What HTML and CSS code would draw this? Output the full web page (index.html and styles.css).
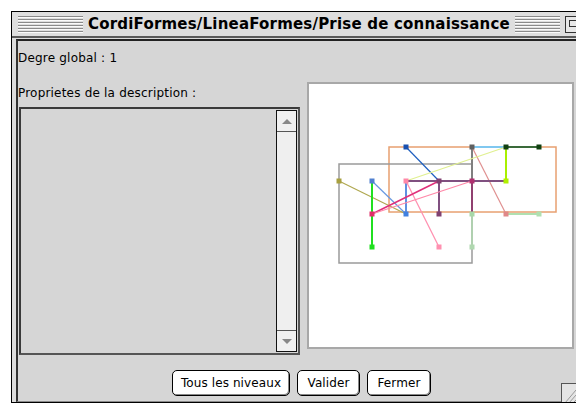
FILE: index.html
```html
<!DOCTYPE html>
<html lang="fr">
<head>
    <meta charset="UTF-8">
    <title>CordiFormes/LineaFormes/Prise de connaissance</title>
<link rel="stylesheet" href="styles.css">
</head>
<body>
    <div class="window">
        <div class="titlebar">
            <span class="stripes stripes-left"></span>
            <h1 class="title">CordiFormes/LineaFormes/Prise de connaissance</h1>
            <span class="stripes stripes-right"></span>
            <span class="zoom-box"><span></span></span>
        </div>
        <div class="frame">
            <div class="content">
                <div class="degre">Degre global : 1</div>
                <div class="panes">
                    <div class="left-pane">
                        <div class="label">Proprietes de la description :</div>
                        <div class="list">
                            <div class="list-items"></div>
                            <div class="scrollbar">
                                <div class="arrow arrow-up"><span></span></div>
                                <div class="track"></div>
                                <div class="arrow arrow-down"><span></span></div>
                            </div>
                        </div>
                    </div>
                    <div class="canvas">
                        <svg viewBox="309 84 263 263" width="263" height="263">
                            <!-- rectangles -->
                            <rect x="389" y="147" width="167" height="65" fill="none" stroke="#e8a070" stroke-width="1.5"/>
                            <rect x="339" y="164" width="133" height="99" fill="none" stroke="#9a9a9a" stroke-width="1.5"/>

                            <!-- segments -->
                            <line x1="406" y1="147" x2="439" y2="181" stroke="#2060c0" stroke-width="1.2"/>
                            <line x1="472" y1="147" x2="506" y2="147" stroke="#80c8f0" stroke-width="2"/>
                            <line x1="506" y1="147" x2="539" y2="147" stroke="#3a6a3a" stroke-width="2"/>
                            <line x1="472" y1="147" x2="472" y2="181" stroke="#808080" stroke-width="2"/>
                            <line x1="472" y1="181" x2="472" y2="214" stroke="#904070" stroke-width="2"/>
                            <line x1="472" y1="214" x2="472" y2="247" stroke="#b0d0b0" stroke-width="2"/>
                            <line x1="472" y1="147" x2="506" y2="214" stroke="#e09090" stroke-width="1.2"/>
                            <line x1="506" y1="147" x2="406" y2="181" stroke="#e0f090" stroke-width="1.2"/>
                            <line x1="506" y1="147" x2="506" y2="181" stroke="#a8f000" stroke-width="2"/>
                            <line x1="339" y1="181" x2="406" y2="214" stroke="#b0a850" stroke-width="1.2"/>
                            <line x1="372" y1="181" x2="406" y2="214" stroke="#6898e0" stroke-width="1.2"/>
                            <line x1="372" y1="181" x2="372" y2="247" stroke="#20e020" stroke-width="2"/>
                            <line x1="406" y1="181" x2="406" y2="214" stroke="#6090e0" stroke-width="2"/>
                            <line x1="406" y1="181" x2="439" y2="247" stroke="#ff90b0" stroke-width="1.2"/>
                            <line x1="406" y1="181" x2="506" y2="181" stroke="#805080" stroke-width="2"/>
                            <line x1="439" y1="181" x2="439" y2="214" stroke="#805080" stroke-width="2"/>
                            <line x1="372" y1="214" x2="439" y2="181" stroke="#e0307a" stroke-width="1.5"/>
                            <line x1="372" y1="214" x2="472" y2="181" stroke="#ff88a8" stroke-width="1.2"/>
                            <line x1="506" y1="214" x2="539" y2="214" stroke="#b0e0b0" stroke-width="2"/>

                            <!-- points -->
                            <rect x="403.5" y="144.5" width="5" height="5" fill="#1850b0"/>
                            <rect x="469.5" y="144.5" width="5" height="5" fill="#606060"/>
                            <rect x="503.5" y="144.5" width="5" height="5" fill="#104010"/>
                            <rect x="536.5" y="144.5" width="5" height="5" fill="#104010"/>
                            <rect x="336.5" y="178.5" width="5" height="5" fill="#a8a040"/>
                            <rect x="369.5" y="178.5" width="5" height="5" fill="#5080d0"/>
                            <rect x="403.5" y="178.5" width="5" height="5" fill="#ff88a8"/>
                            <rect x="436.5" y="178.5" width="5" height="5" fill="#804070"/>
                            <rect x="469.5" y="178.5" width="5" height="5" fill="#b03070"/>
                            <rect x="503.5" y="178.5" width="5" height="5" fill="#b0f000"/>
                            <rect x="369.5" y="211.5" width="5" height="5" fill="#e0306a"/>
                            <rect x="403.5" y="211.5" width="5" height="5" fill="#4080e0"/>
                            <rect x="436.5" y="211.5" width="5" height="5" fill="#804070"/>
                            <rect x="469.5" y="211.5" width="5" height="5" fill="#a8d8a8"/>
                            <rect x="503.5" y="211.5" width="5" height="5" fill="#e08888"/>
                            <rect x="536.5" y="211.5" width="5" height="5" fill="#b0e0b0"/>
                            <rect x="369.5" y="244.5" width="5" height="5" fill="#20e020"/>
                            <rect x="436.5" y="244.5" width="5" height="5" fill="#ff90b0"/>
                            <rect x="469.5" y="244.5" width="5" height="5" fill="#b0d8b0"/>
                        </svg>
                    </div>
                </div>
                <div class="buttons">
                    <button class="btn btn-wide">Tous les niveaux</button>
                    <button class="btn btn-valider">Valider</button>
                    <button class="btn btn-fermer">Fermer</button>
                </div>
            </div>
        </div>
        <div class="grow-box">
            <svg width="15" height="20" viewBox="0 0 15 20">
                <line x1="3" y1="19" x2="14" y2="6" stroke="#999" stroke-width="1"/>
                <line x1="7" y1="19" x2="14" y2="11" stroke="#999" stroke-width="1"/>
                <line x1="11" y1="19" x2="14" y2="16" stroke="#999" stroke-width="1"/>
            </svg>
        </div>
    </div>
</body>
</html>
```

FILE: styles.css
```css
html, body {
    overflow: hidden;
}

body {
    margin: 0;
    padding: 11px 0 0 11px;
    background-color: #fff;
    font-family: "DejaVu Sans", Verdana, sans-serif;
    font-size: 12px;
    letter-spacing: 0.2px;
    color: #000;
}

/* window is cut off by the right edge of the screen */
.window {
    position: relative;
    overflow: hidden;
    width: 564px;
    height: 390px;
    border: 1px solid #000;
    border-right: none;
    background-color: #dcdcdc;
}

/* title bar */
.titlebar {
    display: flex;
    align-items: center;
    height: 24px;
    padding-left: 6px;
    background-color: #dedede;
    border-bottom: 2px solid #5a5a5a;
}

.stripes {
    height: 17px;
    background: repeating-linear-gradient(to bottom, #8a8a8a 0, #8a8a8a 1px, #fafafa 1px, #fafafa 2px, #dedede 2px, #dedede 3px);
}

.stripes-left {
    width: 65px;
    flex: none;
}

.stripes-right {
    flex: 1;
}

.title {
    margin: 0 5px;
    font-size: 15px;
    font-weight: bold;
    letter-spacing: 0.2px;
    white-space: nowrap;
    line-height: 24px;
}

.zoom-box {
    flex: none;
    width: 10px;
    height: 15px;
    margin-left: 5px;
    border: 1px solid #333;
    border-right: none;
    background-color: #e8e8e8;
}

.zoom-box span {
    display: block;
    margin: 3px 0 0 3px;
    width: 7px;
    height: 5px;
    border-top: 1px solid #333;
    border-bottom: 1px solid #333;
    border-left: 1px solid #333;
}

/* main frame */
.frame {
    padding: 1px 0 0 4px;
}

.content {
    height: 360px;
    border-top: 2px solid #222;
    border-left: 2px solid #333;
    border-bottom: 1px solid #8a8a8a;
    background-color: #d6d6d6;
}

.degre {
    margin-top: 10px;
    height: 14px;
    line-height: 14px;
}

.panes {
    display: flex;
    margin-top: 17px;
}

.left-pane {
    width: 282px;
}

.label {
    margin-top: 4px;
    height: 14px;
    line-height: 14px;
}

.list {
    display: flex;
    justify-content: flex-end;
    margin: 7px 0 0 1px;
    width: 277px;
    height: 244px;
    border-top: 2px solid #3a3a3a;
    border-left: 2px solid #3a3a3a;
    border-right: 2px solid #555;
    border-bottom: 2px solid #555;
}

.list-items {
    flex: 1;
}

.scrollbar {
    display: flex;
    flex-direction: column;
    width: 19px;
    margin: 1px 1px 1px 0;
    border: 1px solid #111;
    background-color: #efefef;
}

.arrow {
    height: 20px;
    display: flex;
    align-items: center;
    justify-content: center;
    background-color: #f0f0f0;
}

.arrow-up {
    border-bottom: 1px solid #555;
}

.arrow-down {
    border-top: 1px solid #555;
}

.arrow span {
    width: 0;
    height: 0;
    border-left: 5px solid transparent;
    border-right: 5px solid transparent;
}

.arrow-up span {
    border-bottom: 5px solid #888;
}

.arrow-down span {
    border-top: 5px solid #888;
}

.track {
    flex: 1;
}

.canvas {
    margin-left: 7px;
    width: 263px;
    height: 263px;
    border: 2px solid #a8a8a8;
    background-color: #fff;
}

.canvas svg {
    display: block;
}

/* buttons */
.buttons {
    display: flex;
    margin-top: 15px;
    padding-left: 154px;
}

.btn {
    height: 26px;
    margin-right: 7px;
    padding: 0;
    font-family: "DejaVu Sans", Verdana, sans-serif;
    font-size: 12px;
    letter-spacing: 0.1px;
    color: #000;
    background-color: #fff;
    border: 1px solid #000;
    border-radius: 5px;
    box-shadow: inset -1px -1px 0 #888;
}

.btn-wide {
    width: 118px;
}

.btn-valider {
    width: 63px;
}

.btn-fermer {
    width: 64px;
}

.grow-box {
    position: absolute;
    left: 549px;
    top: 371px;
    width: 15px;
    height: 20px;
    border-top: 1px solid #555;
    border-left: 1px solid #555;
    background-color: #e4e4e4;
}

.grow-box svg {
    display: block;
}
```
